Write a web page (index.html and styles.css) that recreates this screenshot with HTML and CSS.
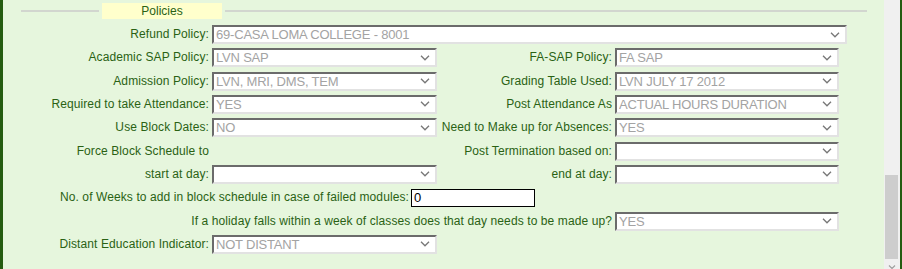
FILE: index.html
```html
<!DOCTYPE html>
<html lang="en">
<head>
    <meta charset="UTF-8">
    <meta name="viewport" content="width=device-width, initial-scale=1.0">
    <title>Policies</title>
    <link rel="stylesheet" href="styles.css">
</head>
<body>
    <div class="window">
        <div class="content">
            <fieldset class="policies">
                <legend><span>Policies</span></legend>
                <div class="form-grid">
                    <label class="lbl">Refund Policy:</label>
                    <select class="fld refund" disabled><option>69-CASA LOMA COLLEGE - 8001</option></select>

                    <label class="lbl">Academic SAP Policy:</label>
                    <select class="fld" disabled><option>LVN SAP</option></select>
                    <label class="lbl">FA-SAP Policy:</label>
                    <select class="fld" disabled><option>FA SAP</option></select>

                    <label class="lbl">Admission Policy:</label>
                    <select class="fld" disabled><option>LVN, MRI, DMS, TEM</option></select>
                    <label class="lbl">Grading Table Used:</label>
                    <select class="fld" disabled><option>LVN JULY 17 2012</option></select>

                    <label class="lbl">Required to take Attendance:</label>
                    <select class="fld" disabled><option>YES</option></select>
                    <label class="lbl">Post Attendance As</label>
                    <select class="fld" disabled><option>ACTUAL HOURS DURATION</option></select>

                    <label class="lbl">Use Block Dates:</label>
                    <select class="fld" disabled><option>NO</option></select>
                    <label class="lbl">Need to Make up for Absences:</label>
                    <select class="fld" disabled><option>YES</option></select>

                    <label class="lbl">Force Block Schedule to</label>
                    <span></span>
                    <label class="lbl">Post Termination based on:</label>
                    <select class="fld" disabled><option></option></select>

                    <label class="lbl">start at day:</label>
                    <select class="fld" disabled><option></option></select>
                    <label class="lbl">end at day:</label>
                    <select class="fld" disabled><option></option></select>

                    <div class="weeks-row">
                        <label class="lbl weeks-lbl">No. of Weeks to add in block schedule in case of failed modules:</label>
                        <input class="txt" type="text" value="0">
                    </div>

                    <label class="lbl holiday-lbl">If a holiday falls within a week of classes does that day needs to be made up?</label>
                    <select class="fld" disabled><option>YES</option></select>

                    <label class="lbl">Distant Education Indicator:</label>
                    <select class="fld" disabled><option>NOT DISTANT</option></select>
                </div>
            </fieldset>
        </div>
        <div class="scrollbar">
            <div class="thumb"></div>
            <div class="arrow">
                <svg width="8" height="5" viewBox="0 0 8 5"><path d="M1 0.5l3 3 3-3" fill="none" stroke="#a0a0a0" stroke-width="1.2"/></svg>
            </div>
        </div>
    </div>
</body>
</html>
```

FILE: styles.css
```css
*{
    margin: 0;
    padding: 0;
    box-sizing: border-box;
}

body{
    font-family: "Liberation Sans", Arial, sans-serif;
    font-size: 12px;
    overflow: hidden;
}

.window{
    display: flex;
    height: 269px;
    border-left: 3px solid #245c10;
    border-right: 2px solid #245c10;
}

.content{
    flex: 1;
    background-color: #e6f6dd;
    padding: 3px 17px 0 18px;
}

.policies{
    border: 0;
    border-top: 2px solid #d2d6cf;
    padding: 6px 0 0 0;
    margin: 0;
    min-width: 0;
}

.policies legend{
    margin-left: 78px;
    padding: 0 3px;
}

.policies legend span{
    display: block;
    width: 120px;
    height: 16px;
    line-height: 16px;
    text-align: center;
    background-color: #ffffcc;
    color: #2a6214;
}

.form-grid{
    display: grid;
    grid-template-columns: 188px 225px 172px 224px;
    grid-auto-rows: 19px;
    column-gap: 3px;
    row-gap: 4.33px;
}

.lbl{
    color: #2a6214;
    text-align: right;
    white-space: nowrap;
    line-height: 19px;
    letter-spacing: 0.1px;
}

.fld{
    appearance: none;
    -webkit-appearance: none;
    height: 19px;
    width: 100%;
    font-family: "Liberation Sans", Arial, sans-serif;
    font-size: 13px;
    letter-spacing: -0.2px;
    color: #a3a3a3;
    opacity: 1;
    background-color: #fff;
    background-image: url("data:image/svg+xml,%3Csvg xmlns='http://www.w3.org/2000/svg' width='10' height='6'%3E%3Cpath d='M1 0.8l4 4 4-4' fill='none' stroke='%23777' stroke-width='1.3'/%3E%3C/svg%3E");
    background-repeat: no-repeat;
    background-position: right 5px center;
    border: 2px solid;
    border-color: #6b6b6b #e2e2e2 #e2e2e2 #6b6b6b;
    padding: 0 2px;
    border-radius: 0;
}

.refund{
    grid-column: 2 / -1;
    width: 635px;
}

.weeks-row{
    grid-column: 1 / -1;
    display: flex;
    gap: 2px;
    align-items: center;
}

.weeks-lbl{
    width: 388px;
}

.txt{
    width: 124px;
    height: 18px;
    border: 1px solid #000;
    background: #fff;
    font-family: "Liberation Sans", Arial, sans-serif;
    font-size: 13px;
    padding: 0 2px;
    color: #000;
}

.holiday-lbl{
    grid-column: 1 / 4;
}

.scrollbar{
    width: 16px;
    background-color: #f0f0f0;
    display: flex;
    flex-direction: column;
}

.thumb{
    margin: 175px 2px 0 1px;
    height: 84px;
    background-color: #cdcdcd;
}

.arrow{
    margin-top: auto;
    height: 8px;
    display: flex;
    justify-content: center;
    padding-top: 4px;
}

.arrow svg{
    display: block;
}
```
